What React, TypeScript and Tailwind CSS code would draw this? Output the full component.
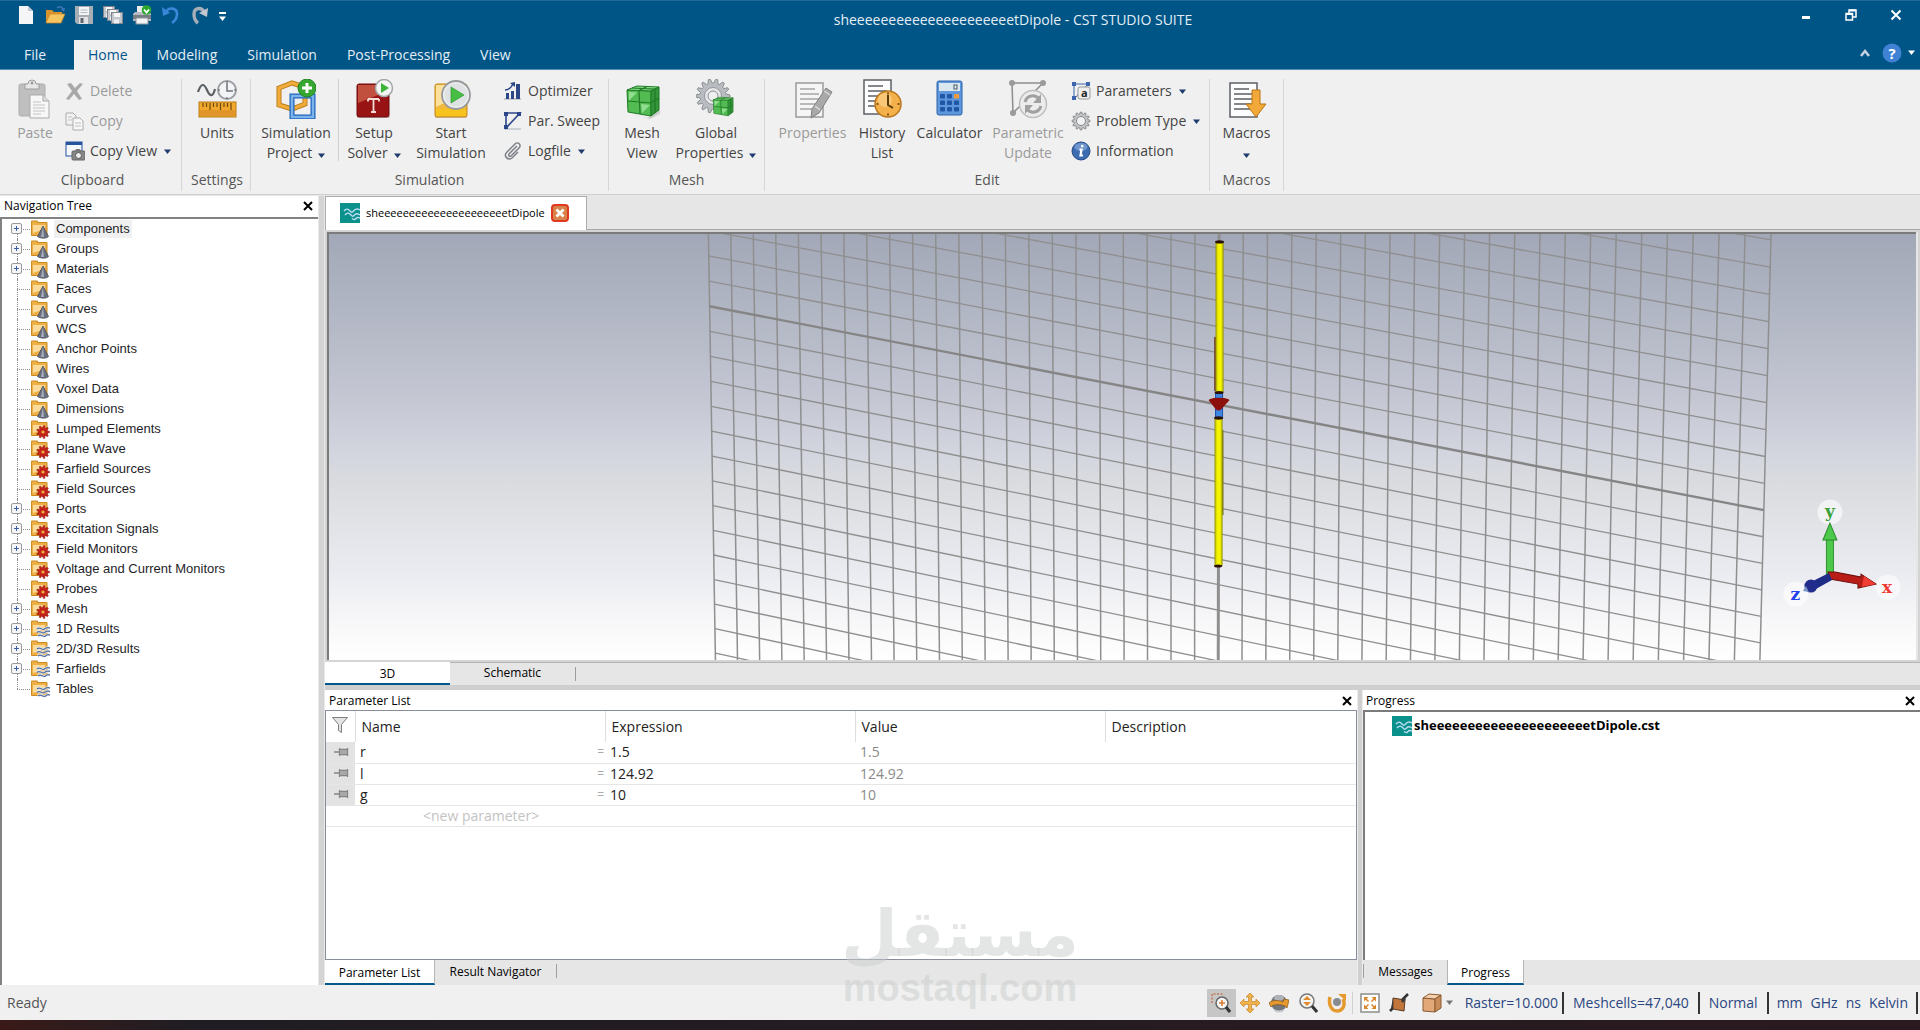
import type { ReactNode } from "react";
import clsx from "clsx";

const PROJECT = "sheeeeeeeeeeeeeeeeeeeeetDipole";

/* ---------- shared bits ---------- */

function Svg({ size = 20, box, className, children }: { size?: number; box?: number; className?: string; children: ReactNode }) {
  const b = box ?? size;
  return (
    <svg width={size} height={size} viewBox={`0 0 ${b} ${b}`} className={clsx("shrink-0", className)} fill="none" aria-hidden="true">
      {children}
    </svg>
  );
}

function Caret({ className }: { className?: string }) {
  return (
    <svg width="7" height="5" viewBox="0 0 7 5" className={clsx("shrink-0", className)} aria-hidden="true">
      <path d="M0 0.5h7L3.5 5z" fill="currentColor" />
    </svg>
  );
}

function CloseX({ label }: { label: string }) {
  return (
    <button aria-label={label} className="flex h-5 w-5 items-center justify-center text-black">
      <Svg size={10}>
        <path d="M1 1l8 8M9 1L1 9" stroke="currentColor" strokeWidth="2" />
      </Svg>
    </button>
  );
}

function WaveLogo({ size = 20 }: { size?: number }) {
  return (
    <Svg size={size} box={20}>
      <rect width="20" height="20" fill="#0b918c" />
      <path d="M4 8c2-2.500 4-2.500 6 0s3 .5 4-.5 3-2.500 6-.5M5 12c2-2.500 4-2.500 6 0s3 .5 4-.5 3-1 5 .5M12 15.500c2 1.500 3 1.500 4 0s3-1 4-.5" stroke="#b9dcf2" strokeWidth="1.400" />
    </Svg>
  );
}

/* ---------- quick access icons ---------- */

const NewIcon = () => (
  <Svg>
    <path d="M3 1h9l5 5v13H3z" fill="#f4f5f7" />
    <path d="M12 1v5h5z" fill="#c3c8d0" />
  </Svg>
);

const OpenIcon = () => (
  <Svg>
    <path d="M1 18V5h6l2 2h8v4" fill="#d9922e" />
    <path d="M1 18l4-9h15l-4 9z" fill="#f7c462" stroke="#c98722" strokeWidth=".7" />
    <path d="M12 3c2-2 5-2 6 2" stroke="#3f78b5" strokeWidth="1.500" />
    <path d="M16 4l3 3 1-4z" fill="#3f78b5" />
  </Svg>
);

const SaveIcon = () => (
  <Svg>
    <path d="M1 1h18v18H3l-2-2z" fill="#a7adb5" />
    <rect x="5" y="2" width="10" height="8" fill="#f2f3f5" />
    <path d="M6.500 5h7M6.500 7.500h7" stroke="#b8bdc4" />
    <rect x="5" y="12" width="9" height="7" fill="#e0e2e5" />
    <rect x="6.500" y="13" width="3" height="5" fill="#5e6670" />
  </Svg>
);

const SaveAllIcon = () => (
  <Svg>
    {[[0, 1], [4, 4], [8, 7]].map(([x, y]) => (
      <g key={x} transform={`translate(${x} ${y})`}>
        <rect x=".5" y=".5" width="11" height="11" fill="#c4c8ce" stroke="#7e858e" />
        <rect x="3" y="1" width="6" height="4" fill="#f6f6f7" />
        <rect x="3" y="7.500" width="5" height="4" fill="#eceef0" />
      </g>
    ))}
  </Svg>
);

const PrintIcon = () => (
  <Svg>
    <rect x="5" y="1" width="9" height="8" fill="#e9ebee" />
    <path d="M1 9l2-2h14l2 2v7H1z" fill="#b7bbc1" />
    <rect x="1" y="10" width="18" height="4" fill="#777d85" />
    <rect x="4" y="13" width="12" height="6" fill="#f3f3f4" stroke="#8c929a" />
    <circle cx="14.500" cy="5" r="4.800" fill="#2ea82f" />
    <path d="M12 4.500L14.500 7.500l2.500-3" stroke="#fff" strokeWidth="1.800" />
  </Svg>
);

const UndoIcon = () => (
  <Svg>
    <path d="M4 8c4-7 12-5 12 1 0 4-2 7-5 9" stroke="#3a86d8" strokeWidth="2.600" />
    <path d="M1 2l1 9 7-3z" fill="#3a86d8" />
  </Svg>
);

const RedoIcon = () => (
  <Svg>
    <path d="M15 8C11 1 4 3 4 9c0 4 1 7 4 9" stroke="#a6afb8" strokeWidth="3.400" />
    <path d="M18 3l-1 9-8-4z" fill="#c2c8ce" />
  </Svg>
);

/* ---------- big ribbon icons, 40 x 40 ---------- */

const PasteIcon = () => (
  <Svg size={40}>
    <rect x="4" y="5" width="26" height="32" rx="2" fill="#bfbfbf" />
    <rect x="4" y="5" width="26" height="32" rx="2" stroke="#adadad" />
    <path d="M10 5h3a4 4 0 0 1 8 0h3v5H10z" fill="#e8e8e8" stroke="#9d9d9d" />
    <circle cx="17" cy="4" r="1.500" fill="#9d9d9d" />
    <path d="M15 16h13l6 6v17H15z" fill="#f7f7f7" stroke="#a9a9a9" />
    <path d="M28 16v6h6" fill="#ddd" stroke="#a9a9a9" />
    <path d="M18 23h8M18 26h12M18 29h12M18 32h12M18 35h8" stroke="#c4c4c4" />
  </Svg>
);

const UnitsIcon = () => (
  <Svg size={40}>
    <path d="M1 13c3-9 6-9 9-2s6 7 8-1" stroke="#5c6166" strokeWidth="2.200" />
    <circle cx="30" cy="11" r="9" fill="#f3f4f5" stroke="#9b9ea3" strokeWidth="2" />
    <path d="M30 4v8h6" stroke="#6b7076" strokeWidth="1.500" />
    <path d="M30 2v2M30 18v2M21 11h2M37 11h2" stroke="#55595f" />
    <rect x="2" y="23" width="37" height="15" fill="#f0a92c" stroke="#b97b14" />
    <path d="M3 37h35v-6H3z" fill="#e0942a" />
    <path d="M6 24v4M9.500 24v4M13 24v7M16.500 24v4M20 24v4M23.500 24v7M27 24v4M30.500 24v4M34 24v7" stroke="#6e4a10" strokeWidth="1.200" />
  </Svg>
);

const SimProjectIcon = () => (
  <Svg size={40}>
    <path d="M3 9l13-5 13 4v17l-13 5L3 26z" fill="none" stroke="#b87b17" strokeWidth="5" />
    <path d="M3 9l13-5 13 4v17l-13 5L3 26z" fill="none" stroke="#f1ab3a" strokeWidth="3.200" />
    <rect x="16" y="17" width="21" height="21" stroke="#1b63bd" strokeWidth="5" />
    <rect x="16" y="17" width="21" height="21" stroke="#7db2ea" strokeWidth="2.600" />
    <circle cx="31" cy="9" r="9" fill="#36a832" stroke="#23811f" />
    <path d="M31 4v10M26 9h10" stroke="#fff" strokeWidth="3" />
  </Svg>
);

const SetupSolverIcon = () => (
  <Svg size={40}>
    <rect x="3" y="37" width="33" height="2" fill="#cfcfcf" />
    <rect x="3" y="5" width="32" height="33" rx="2" fill="#981414" stroke="#6f0c0c" />
    <path d="M4 6h30v6L4 24z" fill="#c2503f" />
    <path d="M14 20h11M19.500 20v13M17 33h5M14 20v2.500M25 20v2.500" stroke="#f6dcd6" strokeWidth="1.800" />
    <circle cx="30" cy="9" r="8.500" fill="#f4f5f5" stroke="#a3a6a9" strokeWidth="1.500" />
    <path d="M27 4l8 5-8 5z" fill="#3cb43a" />
  </Svg>
);

const StartIcon = () => (
  <Svg size={40}>
    <rect x="4" y="37" width="32" height="2" fill="#cfcfcf" />
    <rect x="4" y="5" width="32" height="33" rx="2" fill="#f3b93c" stroke="#c08517" />
    <path d="M5 6h15v15L5 28z" fill="#fbe19b" />
    <path d="M5 30h30v7H5z" fill="#f7c41f" />
    <circle cx="25" cy="16" r="14" fill="#eceeef" stroke="#97999c" strokeWidth="1.800" />
    <circle cx="25" cy="16" r="11.500" fill="#dfe2e3" />
    <path d="M20 8l13 8-13 8z" fill="#46bd43" stroke="#2f9a2d" strokeWidth=".7" />
  </Svg>
);

function GreenCube({ x = 0, y = 0, s = 1 }: { x?: number; y?: number; s?: number }) {
  return (
    <g transform={`translate(${x} ${y}) scale(${s})`}>
      <path d="M2 6l24 1v25L3 28z" fill="#52bb52" stroke="#1f7a24" />
      <path d="M2 6l10-4 22 1-8 4z" fill="#8ade89" stroke="#1f7a24" />
      <path d="M26 7l8-4v23l-8 6z" fill="#33963a" stroke="#1f7a24" />
      <path d="M14 6.500l1 23.500M2.500 17L26 19l8-5M30 5v24M7 4l23 1.200M14 6.500l8-4" stroke="#1f7a24" strokeWidth="1.200" />
      <path d="M4 8l8 .5-8 8zM16 20l9 1-8 8z" fill="#a8e9a6" opacity=".75" />
    </g>
  );
}

const MeshIcon = () => (
  <Svg size={40}>
    <path d="M3 34l22 5 13-8v4l-10 5z" fill="#cdd0cd" />
    <GreenCube x={3} y={5} />
  </Svg>
);

const gearPath = (cx: number, cy: number, r: number, teeth: number, depth: number) => {
  const pts: string[] = [];
  for (let i = 0; i < teeth * 4; i++) {
    const rad = i % 4 < 2 ? r : r - depth;
    const a = ((i - 0.5) / (teeth * 4)) * Math.PI * 2;
    pts.push(`${(cx + rad * Math.cos(a)).toFixed(1)} ${(cy + rad * Math.sin(a)).toFixed(1)}`);
  }
  return `M${pts.join("L")}Z`;
};

const GlobalIcon = () => (
  <Svg size={40}>
    <path d={gearPath(17, 17, 17, 14, 4)} fill="#b9bcc0" stroke="#8a8e93" />
    <circle cx="17" cy="17" r="8.500" fill="#e6e7e9" stroke="#95989c" />
    <circle cx="17" cy="17" r="5" fill="#f0f0f0" stroke="#8a8e93" />
    <GreenCube x={16} y={17} s={0.62} />
  </Svg>
);

function Page({ x = 0, y = 0, gray }: { x?: number; y?: number; gray?: boolean }) {
  return (
    <g transform={`translate(${x} ${y})`}>
      <rect x="1" y="1" width="27" height="34" fill={gray ? "#f5f5f5" : "#fdfdfd"} stroke={gray ? "#9b9b9b" : "#5b5f66"} strokeWidth="1.500" />
      <path d="M5 7h15M5 12h19M5 17h19M5 22h17M5 27h19" stroke={gray ? "#a5a5a5" : "#5b5f66"} strokeWidth="1.600" />
    </g>
  );
}

const PropertiesIcon = () => (
  <Svg size={40}>
    <Page x={2} y={3} gray />
    <path d="M19 30L33 9l6 4-13 21-8 5z" fill="#a9a9a9" stroke="#7f7f7f" />
    <path d="M31 12l6 4M22 27l5 4" stroke="#dcdcdc" strokeWidth="1.500" />
  </Svg>
);

const HistoryIcon = () => (
  <Svg size={40}>
    <Page x={1} />
    <circle cx="26" cy="25" r="13" fill="#f4b04a" stroke="#b9781c" strokeWidth="1.500" />
    <circle cx="23" cy="21" r="7" fill="#fad38b" opacity=".7" />
    <path d="M26 16v10l5 3" stroke="#5d3b09" strokeWidth="2" />
    <path d="M26 13.500v2M26 34.500v2M14.500 25h2M35.500 25h2" stroke="#5d3b09" strokeWidth="1.500" />
  </Svg>
);

const CalculatorIcon = () => (
  <Svg size={40}>
    <rect x="7" y="2" width="25" height="34" rx="2" fill="#5f97dc" stroke="#2c62ab" />
    <rect x="9" y="4" width="21" height="8" fill="#dbe7ef" />
    <rect x="24" y="6" width="3" height="4" stroke="#4c5a66" />
    {[15, 21.5, 28].map((y) =>
      [10, 17, 24].map((x) => (
        <rect key={`${x}-${y}`} x={x} y={y} width="5" height="4.500" rx="1" fill={x === 24 && y === 15 ? "#f29a3c" : "#1f56a6"} />
      ))
    )}
  </Svg>
);

const ParametricIcon = () => (
  <Svg size={40}>
    <path d="M4 4h31L5 34z" stroke="#8d8d8d" strokeWidth="1.500" />
    <circle cx="4" cy="4" r="3" fill="#9a9a9a" />
    <circle cx="35" cy="4" r="3" fill="#9a9a9a" />
    <circle cx="5" cy="34" r="3" fill="#9a9a9a" />
    <circle cx="25" cy="25" r="13.500" fill="#ececec" stroke="#bdbdbd" strokeWidth="1.500" />
    <path d="M17 23c2-7 10-8 14-3M33 27c-2 7-10 8-14 3" stroke="#a0a0a0" strokeWidth="3" />
    <path d="M33 15v9h-8zM17 35v-9h8z" fill="#a0a0a0" />
  </Svg>
);

const MacrosIcon = () => (
  <Svg size={40}>
    <Page x={2} y={3} />
    <path d="M25 11h8v14h6L29 38 19 25h6z" fill="#f3a93a" stroke="#b97413" />
  </Svg>
);

/* ---------- small ribbon icons ---------- */

const DeleteIcon = () => (
  <Svg>
    <path d="M2 3l4-1 4 5 5-5 3 1-6 7 5 8-3 1-5-6-5 6-3-1 6-8z" fill="#a9a9a9" />
  </Svg>
);

const CopyIcon = () => (
  <Svg>
    <path d="M1 2h7l3 3v9H1z" fill="#f2f2f2" stroke="#ababab" />
    <path d="M8 7h7l3 3v9H8z" fill="#f7f7f7" stroke="#ababab" />
    <path d="M3 6h4M3 9h4M10 12h6M10 15h6" stroke="#c0c0c0" />
  </Svg>
);

const CopyViewIcon = () => (
  <Svg>
    <rect x="1" y="1" width="16" height="14" fill="#f4f7fb" stroke="#25539d" />
    <path d="M1 1h16v3H1z" fill="#25539d" />
    <rect x="7" y="10" width="13" height="9" rx="1" fill="#888" stroke="#666" />
    <path d="M10 10l1-2h4l1 2" fill="#777" />
    <circle cx="13.500" cy="14.500" r="3" fill="#eee" stroke="#555" />
  </Svg>
);

const OptimizerIcon = () => (
  <Svg>
    <path d="M1 18h17" stroke="#9aa0a8" />
    <path d="M3 12h3v6H3zM8 10h3v8H8zM13 3h4v15h-4z" fill="#2c4788" />
    <path d="M2 9c3 0 6-2 8-6" stroke="#2c4788" strokeWidth="1.500" />
    <path d="M7 2l5-1v5z" fill="#2c4788" />
  </Svg>
);

const SweepIcon = () => (
  <Svg>
    <path d="M3 2h14L3 17zM3 2v15" stroke="#2c4788" strokeWidth="1.600" />
    <path d="M2 18h16" stroke="#aab0b8" />
    <path d="M1 1h4v4H1zM14 1h4v4h-4zM1 14h4v4H1z" fill="#2c4788" />
  </Svg>
);

const ClipIcon = () => (
  <Svg>
    <path d="M14 5L6 13c-1 2 1 3 2 2l8-8c3-3-1-7-4-4L4 11c-4 4 1 9 5 6l6-6" stroke="#7c8085" strokeWidth="1.500" />
  </Svg>
);

const ParametersIcon = () => (
  <Svg>
    <path d="M3 3h14L3 18z" stroke="#3d64ad" />
    <path d="M1 1h4v4H1zM15 1h4v4h-4zM1 15h4v4H1z" fill="#3d64ad" />
    <rect x="7" y="6" width="12" height="12" rx="2" fill="#eee" stroke="#999" />
    <text x="10" y="16" fontSize="11" fontWeight="700" fontFamily="Open Sans, sans-serif" fill="#222">a</text>
  </Svg>
);

const ProblemIcon = () => (
  <Svg>
    <path d={gearPath(10, 10, 9, 12, 2)} fill="#c3c5c8" stroke="#85888c" />
    <circle cx="10" cy="10" r="4.500" fill="#f2f2f2" stroke="#85888c" />
  </Svg>
);

const InfoIcon = () => (
  <Svg>
    <circle cx="10" cy="10" r="9" fill="#3d6cb0" stroke="#254b86" />
    <ellipse cx="10" cy="6" rx="6.500" ry="4" fill="#8fb3e0" opacity=".6" />
    <path d="M11.500 4l-.5 2.300M8.500 8.500h2l-1 6h2.500" stroke="#fff" strokeWidth="2.200" />
  </Svg>
);

/* ---------- ribbon ---------- */

interface BigProps {
  icon: ReactNode;
  lines: [string, string?];
  caret?: boolean;
  disabled?: boolean;
  width: string;
}

function BigButton({ icon, lines, caret, disabled, width }: BigProps) {
  return (
    <button
      disabled={disabled}
      className={clsx("flex flex-col items-center whitespace-nowrap leading-5", width, disabled ? "text-[#9a9a9a]" : "text-[#444]")}
    >
      {icon}
      <span className="mt-1">{lines[0]}</span>
      <span className="flex h-5 items-center gap-[6px]">
        {lines[1]}
        {caret && <Caret className="mt-1 text-[#1f3a6e]" />}
      </span>
    </button>
  );
}

function SmallButton({ icon, label, caret, disabled }: { icon: ReactNode; label: string; caret?: boolean; disabled?: boolean }) {
  return (
    <button disabled={disabled} className={clsx("flex h-[30px] items-center gap-[5px] whitespace-nowrap", disabled ? "text-[#9a9a9a]" : "text-[#444]")}>
      {icon}
      {label}
      {caret && <Caret className="ml-[2px] text-[#1f3a6e]" />}
    </button>
  );
}

function Group({ title, width, children }: { title: string; width: string; children: ReactNode }) {
  return (
    <section aria-label={title} className={clsx("flex shrink-0 flex-col border-r border-[#d6d6d6]", width)}>
      <div className="flex h-[91px]">{children}</div>
      <div className="text-center leading-5 text-[#555]">{title}</div>
    </section>
  );
}

const SmallColumn = ({ className, children }: { className?: string; children: ReactNode }) => (
  <div className={clsx("-mt-[3px] flex flex-col items-start", className)}>{children}</div>
);

function Ribbon() {
  return (
    <div className="flex h-[125px] border-b border-[#cfcfcf] bg-[#f0f0f0] pt-[9px] pb-[3px] text-sm">
      <Group title="Clipboard" width="w-[182px] pl-1">
        <BigButton icon={<PasteIcon />} lines={["Paste"]} width="w-[62px]" disabled />
        <SmallColumn className="-ml-[1px]">
          <SmallButton icon={<DeleteIcon />} label="Delete" disabled />
          <SmallButton icon={<CopyIcon />} label="Copy" disabled />
          <SmallButton icon={<CopyViewIcon />} label="Copy View" caret />
        </SmallColumn>
      </Group>
      <Group title="Settings" width="w-[69px] pl-[2px]">
        <BigButton icon={<UnitsIcon />} lines={["Units"]} width="w-full" />
      </Group>
      <Group title="Simulation" width="w-[358px]">
        <BigButton icon={<SimProjectIcon />} lines={["Simulation", "Project"]} width="w-[87px] pl-[3px]" caret />
        <div className="h-[82px] w-px bg-[#d0d0d0]" />
        <BigButton icon={<SetupSolverIcon />} lines={["Setup", "Solver"]} width="w-[70px]" caret />
        <BigButton icon={<StartIcon />} lines={["Start", "Simulation"]} width="w-[84px]" />
        <SmallColumn className="ml-[10px]">
          <SmallButton icon={<OptimizerIcon />} label="Optimizer" />
          <SmallButton icon={<SweepIcon />} label="Par. Sweep" />
          <SmallButton icon={<ClipIcon />} label="Logfile" caret />
        </SmallColumn>
      </Group>
      <Group title="Mesh" width="w-[156px]">
        <BigButton icon={<MeshIcon />} lines={["Mesh", "View"]} width="w-[66px]" />
        <BigButton icon={<GlobalIcon />} lines={["Global", "Properties"]} width="w-[82px]" caret />
      </Group>
      <Group title="Edit" width="w-[445px]">
        <BigButton icon={<PropertiesIcon />} lines={["Properties"]} width="w-[95px]" disabled />
        <BigButton icon={<HistoryIcon />} lines={["History", "List"]} width="w-[44px]" />
        <BigButton icon={<CalculatorIcon />} lines={["Calculator"]} width="w-[91px]" />
        <BigButton icon={<ParametricIcon />} lines={["Parametric", "Update"]} width="w-[66px]" disabled />
        <SmallColumn className="ml-[10px]">
          <SmallButton icon={<ParametersIcon />} label="Parameters" caret />
          <SmallButton icon={<ProblemIcon />} label="Problem Type" caret />
          <SmallButton icon={<InfoIcon />} label="Information" />
        </SmallColumn>
      </Group>
      <Group title="Macros" width="w-[74px]">
        <BigButton icon={<MacrosIcon />} lines={["Macros"]} width="w-full" caret />
      </Group>
    </div>
  );
}

/* ---------- title bar ---------- */

const QUICK = [
  { label: "New", Icon: NewIcon },
  { label: "Open", Icon: OpenIcon },
  { label: "Save", Icon: SaveIcon },
  { label: "Save all", Icon: SaveAllIcon },
  { label: "Print", Icon: PrintIcon },
  { label: "Undo", Icon: UndoIcon },
  { label: "Redo", Icon: RedoIcon },
];

function TitleBar() {
  return (
    <header className="bg-[#005587] text-sm text-white">
      <div className="flex h-10 border-t border-[#1f6a97]">
        <div className="flex w-[230px] items-center gap-[9px] pb-3 pl-4">
          {QUICK.map(({ label, Icon }) => (
            <button key={label} aria-label={label} className="shrink-0">
              <Icon />
            </button>
          ))}
          <button aria-label="Customize quick access" className="flex flex-col items-center gap-[2px] pt-1">
            <span className="h-[2px] w-[7px] bg-white" />
            <Caret />
          </button>
        </div>
        <h1 className="grow text-center leading-[38px] text-[#e4eef5]">{PROJECT} - CST STUDIO SUITE</h1>
        <div className="flex items-center justify-end gap-[25px] pr-[14px] pb-3">
          <button aria-label="Minimize" className="flex h-5 w-5 items-center justify-center pt-[6px]">
            <span className="h-[3px] w-[8px] bg-white" />
          </button>
          <button aria-label="Restore" className="flex h-5 w-5 items-center justify-center">
            <Svg size={12}>
              <path d="M4 4V1h7v7H8" stroke="#fff" strokeWidth="1.500" />
              <rect x="1" y="4.500" width="6.500" height="6.500" stroke="#fff" strokeWidth="1.500" />
              <path d="M4 1.500h7M1 5h7" stroke="#fff" strokeWidth="2" />
            </Svg>
          </button>
          <button aria-label="Close" className="flex h-5 w-5 items-center justify-center">
            <Svg size={12}>
              <path d="M1.500 1.500l9 9M10.500 1.500l-9 9" stroke="#fff" strokeWidth="2" />
            </Svg>
          </button>
        </div>
      </div>
      <nav className="flex h-[30px] items-stretch border-b border-[#4f8db3]">
        <button className="w-[74px] pr-1 text-[#e4eef5]">File</button>
        <button className="-mb-px bg-[#f0f0f0] px-[14px] text-[#00558a]">Home</button>
        {["Modeling", "Simulation", "Post-Processing", "View"].map((t) => (
          <button key={t} className="px-[15px] pt-px text-[#e4eef5]">
            {t}
          </button>
        ))}
        <div className="ml-auto flex items-center gap-[6px] pr-[5px] pb-1">
          <button aria-label="Collapse ribbon" className="mr-[6px]">
            <Svg size={10}>
              <path d="M1 8l4-5 4 5" stroke="#c7d3df" strokeWidth="2.500" />
            </Svg>
          </button>
          <button aria-label="Help">
            <Svg>
              <circle cx="10" cy="10" r="9.500" fill="#3f82d4" />
              <text x="10" y="15.500" textAnchor="middle" fontSize="15" fontWeight="700" fontFamily="Open Sans, sans-serif" fill="#fff">?</text>
            </Svg>
          </button>
          <Caret />
        </div>
      </nav>
    </header>
  );
}

/* ---------- navigation tree ---------- */

type Kind = "cone" | "gear" | "wave";

const TREE: { label: string; kind: Kind; open?: boolean }[] = [
  { label: "Components", kind: "cone", open: true },
  { label: "Groups", kind: "cone", open: true },
  { label: "Materials", kind: "cone", open: true },
  { label: "Faces", kind: "cone" },
  { label: "Curves", kind: "cone" },
  { label: "WCS", kind: "cone" },
  { label: "Anchor Points", kind: "cone" },
  { label: "Wires", kind: "cone" },
  { label: "Voxel Data", kind: "cone" },
  { label: "Dimensions", kind: "cone" },
  { label: "Lumped Elements", kind: "gear" },
  { label: "Plane Wave", kind: "gear" },
  { label: "Farfield Sources", kind: "gear" },
  { label: "Field Sources", kind: "gear" },
  { label: "Ports", kind: "gear", open: true },
  { label: "Excitation Signals", kind: "gear", open: true },
  { label: "Field Monitors", kind: "gear", open: true },
  { label: "Voltage and Current Monitors", kind: "gear" },
  { label: "Probes", kind: "gear" },
  { label: "Mesh", kind: "gear", open: true },
  { label: "1D Results", kind: "wave", open: true },
  { label: "2D/3D Results", kind: "wave", open: true },
  { label: "Farfields", kind: "wave", open: true },
  { label: "Tables", kind: "wave" },
];

function FolderIcon({ kind }: { kind: Kind }) {
  return (
    <Svg>
      <path d="M1.500 3.500v-1.500h6v1.500h9.500v13h-15.500z" fill="#eeb045" stroke="#c98a22" />
      <path d="M3 6h12v4L3 14z" fill="#fadb9c" />
      {kind === "cone" && (
        <>
          <path d="M13 7l5.500 10.500c-2 2.200-8 2.200-11 0z" fill="#6a7080" stroke="#474c5a" strokeWidth=".8" />
          <path d="M13 8l1 10h-3z" fill="#a7adba" />
        </>
      )}
      {kind === "gear" && (
        <>
          <path d={gearPath(13, 13, 6.5, 9, 2)} fill="#c3221b" stroke="#931510" strokeWidth=".6" />
          <circle cx="13" cy="13" r="1.600" fill="#f0b040" />
        </>
      )}
      {kind === "wave" && (
        <>
          <path d="M7 10c3-3 5 2 7.500 0S18 8.500 20 9M7 13.500c3-3 5 2 7.500 0S18 12 20 12.500M8 17c3-3 5 2 7.500 0S18 15.500 20 16" stroke="#e9edf4" strokeWidth="2.600" />
          <path d="M7 10c3-3 5 2 7.500 0S18 8.500 20 9M7 13.500c3-3 5 2 7.500 0S18 12 20 12.500M8 17c3-3 5 2 7.500 0S18 15.500 20 16" stroke="#5470a0" strokeWidth="1.300" />
        </>
      )}
    </Svg>
  );
}

function NavigationTree() {
  return (
    <aside className="flex w-[318px] shrink-0 flex-col bg-white">
      <div className="flex h-[21px] items-center justify-between pl-1 text-xs text-black">
        <h2>Navigation Tree</h2>
        <CloseX label="Close navigation tree" />
      </div>
      <ul className="grow border-t-2 border-l-2 border-[#828282] font-['Liberation_Sans',sans-serif] text-[13px] text-[#1e1e28]">
        {TREE.map((n, i) => (
          <li key={n.label} className="flex h-5 items-center pl-[9px]">
            <span className="relative flex h-5 w-[19px] items-center">
              <span
                className={clsx(
                  "absolute left-[6px] border-l border-dotted border-[#8a8a8a]",
                  i === 0 ? "top-[10px] h-[10px]" : i === TREE.length - 1 ? "top-0 h-[10px]" : "top-0 h-5"
                )}
              />
              <span className="absolute top-[10px] right-0 left-[6px] border-t border-dotted border-[#8a8a8a]" />
              {n.open && (
                <button aria-label={`Expand ${n.label}`} className="relative h-[11px] w-[11px] rounded-[2px] border border-[#9a9a9a] bg-[#f6f6f6]">
                  <span className="absolute top-[4px] left-[2px] h-px w-[5px] bg-[#3f5fa8]" />
                  <span className="absolute top-[2px] left-[4px] h-[5px] w-px bg-[#3f5fa8]" />
                </button>
              )}
            </span>
            <FolderIcon kind={n.kind} />
            <span className={clsx("ml-1 px-[2px] leading-[18px]", i === 0 && "bg-[#f0f0f0]")}>{n.label}</span>
          </li>
        ))}
      </ul>
    </aside>
  );
}

/* ---------- 3D viewport ---------- */

// perspective spacing of the vertical grid lines around the y axis
const persp = (center: number, a: number, b: number, n: number) => center + (a * n) / (1 - b * n);

// the plane's outer edges lean inwards towards the bottom
const leftEdge = (y: number) => 709 + (7.3 * (y - 234)) / 426;
const rightEdge = (y: number) => 1771.3 - (11.3 * (y - 234)) / 426;

const range = (from: number, to: number) => Array.from({ length: to - from + 1 }, (_, i) => from + i);

function Viewport() {
  return (
    <svg className="block h-full w-full" viewBox="330 234 1586 426" preserveAspectRatio="xMidYMid slice" role="img" aria-label="3D view of the dipole">
      <defs>
        <linearGradient id="sky" x1="0" y1="0" x2="0" y2="1">
          <stop offset="0" stopColor="#a2a8b7" />
          <stop offset=".28" stopColor="#babecb" />
          <stop offset=".4" stopColor="#c6c8d4" />
          <stop offset=".52" stopColor="#d3d6df" />
          <stop offset=".58" stopColor="#dadbdf" />
          <stop offset=".8" stopColor="#ebecf1" />
          <stop offset=".92" stopColor="#f8f8f9" />
          <stop offset="1" stopColor="#ffffff" />
        </linearGradient>
        <linearGradient id="rod" x1="0" y1="0" x2="1" y2="0">
          <stop offset="0" stopColor="#8f8f00" />
          <stop offset=".3" stopColor="#f2f200" />
          <stop offset=".7" stopColor="#f6f600" />
          <stop offset="1" stopColor="#8f8f00" />
        </linearGradient>
      </defs>
      <rect x="330" y="234" width="1586" height="426" fill="url(#sky)" />
      <g stroke="#8f8f8f">
        {range(-22, 22).map((n) => (
          <line
            key={n}
            x1={persp(1219.5, 24.1, 0.00177, n)}
            y1="234"
            x2={persp(1218.7, 23.69, 0.00169, n)}
            y2="660"
            strokeWidth={n === 0 ? 3 : 1.5}
          />
        ))}
        {range(-19, 15).map((k) => {
          const y1 = 306.3 + 25.1 * k - 0.024 * k * k;
          const y2 = 510 + 26.7 * k - 0.03 * k * k;
          return (
            <line
              key={k}
              x1={leftEdge(y1)}
              y1={y1}
              x2={rightEdge(y2)}
              y2={y2}
              stroke={k === 0 ? "#858585" : undefined}
              strokeWidth={k === 0 ? 2.4 : 1.3}
            />
          );
        })}
      </g>

      {/* dipole arms, gap and port */}
      <rect x="1214.500" y="337" width="2" height="54" fill="#7a4a3a" />
      <rect x="1222" y="430" width="2" height="85" fill="#7d7a30" />
      <rect x="1216" y="243" width="8" height="149" fill="url(#rod)" />
      <rect x="1215" y="419" width="8" height="147" fill="url(#rod)" />
      <rect x="1216" y="392" width="7" height="27" fill="#3f86e0" />
      <path d="M1216 392v27M1223 392v27" stroke="#1c4ea8" />
      <ellipse cx="1220" cy="242" rx="4.500" ry="1.700" fill="#2a0f0a" />
      <ellipse cx="1219.500" cy="392.500" rx="4.500" ry="1.500" fill="#2a0f0a" />
      <ellipse cx="1219" cy="418" rx="4.500" ry="1.700" fill="#2a0f0a" />
      <ellipse cx="1218.500" cy="566" rx="4" ry="1.500" fill="#2a0f0a" />
      <path d="M1209 400c3-3 18-3 21 0l-8 9c-2 2-4 2-6 0z" fill="#8c100b" />

      {/* orientation triad */}
      <g fill="#fff" opacity=".6">
        <circle cx="1830" cy="512" r="12.500" />
        <circle cx="1888" cy="587" r="12.500" />
        <circle cx="1796" cy="594" r="12.500" />
      </g>
      <rect x="1826.500" y="539" width="7" height="35" fill="#4cc84a" stroke="#2f9430" />
      <path d="M1830 523l7 17h-14z" fill="#4cc84a" stroke="#2a8a2a" />
      <path d="M1828 572h7l26 5v-3l15 10-18 4v-4l-28-5z" fill="#b81d17" stroke="#6c0d0a" />
      <path d="M1864 576l12 8-14 3z" fill="#f03d33" />
      <path d="M1829 573l-16 8 3 8 16-9z" fill="#1f2c86" />
      <circle cx="1811" cy="586" r="6.500" fill="#222c8c" />
      <path d="M1806 586l-3 5 6 1z" fill="#7a96c8" />
      <g fontFamily="DejaVu Serif, serif" fontWeight="700" fontSize="17" textAnchor="middle">
        <text x="1830" y="517" fill="#3aa037">y</text>
        <text x="1887" y="593" fill="#ef3b33">x</text>
        <text x="1795.500" y="600" fill="#2440ee">z</text>
      </g>
    </svg>
  );
}

/* ---------- bottom panels ---------- */

const PARAMS = [
  { name: "r", value: "1.5" },
  { name: "l", value: "124.92" },
  { name: "g", value: "10" },
];

function Tab({ label, active, className }: { label: string; active?: boolean; className?: string }) {
  return (
    <button
      role="tab"
      aria-selected={!!active}
      className={clsx("h-full text-xs text-black", active ? "border-b-2 border-[#00588c] bg-white pt-[2px]" : "border-b-2 border-transparent", className)}
    >
      {label}
    </button>
  );
}

const TabDivider = () => <span className="mt-1 h-[14px] w-px bg-[#9e9e9e]" />;

function ParameterList() {
  return (
    <section className="flex min-w-0 grow flex-col">
      <div className="flex h-5 items-center justify-between bg-white pt-px pl-1 text-xs text-black">
        <h2>Parameter List</h2>
        <CloseX label="Close parameter list" />
      </div>
      <div className="grow border border-[#878d9a] bg-white">
        <table className="w-full table-fixed border-collapse text-left text-sm text-[#222]">
          <colgroup>
            <col className="w-[29px]" />
            <col className="w-[250px]" />
            <col className="w-[250px]" />
            <col className="w-[250px]" />
            <col />
          </colgroup>
          <thead>
            <tr className="h-[31px]">
              <th className="pb-1 pl-[5px]">
                <Svg size={18} box={18}>
                  <path d="M1.500 1.500h15l-6 7v8l-3-2v-6z" fill="#e4e4e4" stroke="#7d7d7d" />
                </Svg>
              </th>
              {["Name", "Expression", "Value", "Description"].map((h) => (
                <th key={h} className="border-l border-[#dedede] pt-px pl-[6px] font-normal">
                  {h}
                </th>
              ))}
            </tr>
          </thead>
          <tbody>
            {PARAMS.map((p) => (
              <tr key={p.name} className="h-[21px] border-b border-[#e6e6e6] leading-5">
                <td className="bg-[#e3e3e3] pl-2">
                  <Svg size={15} box={15}>
                    <path d="M0 7h5M5.500 3v8M13.500 3v8M6 4.500h7M6 9.500h7" stroke="#858585" strokeWidth="1.300" />
                    <rect x="6" y="5" width="7" height="4" fill="#a8a8a8" />
                  </Svg>
                </td>
                <td className="pl-[5px]">
                  <span className="flex justify-between">
                    {p.name}
                    <span className="pr-[1px] text-xs leading-5 text-[#aaa]">=</span>
                  </span>
                </td>
                <td className="pl-[5px]">{p.value}</td>
                <td className="pl-[5px] text-[#8a8a8a]">{p.value}</td>
                <td />
              </tr>
            ))}
            <tr className="h-[21px] border-b border-[#e6e6e6]">
              <td />
              <td colSpan={4} className="pl-[68px]">
                <input aria-label="New parameter" placeholder="<new parameter>" className="block h-5 w-40 outline-none placeholder:text-[#c3c3c3]" />
              </td>
            </tr>
          </tbody>
        </table>
      </div>
      <div role="tablist" className="flex h-[25px]">
        <Tab label="Parameter List" active className="w-[110px] border-r border-r-[#b5b5b5]" />
        <Tab label="Result Navigator" className="w-[121px]" />
        <TabDivider />
      </div>
    </section>
  );
}

function ProgressPanel() {
  return (
    <section className="flex w-[557px] shrink-0 flex-col">
      <div className="flex h-5 items-center justify-between bg-white pt-px pl-[3px] text-xs text-black">
        <h2>Progress</h2>
        <CloseX label="Close progress" />
      </div>
      <div className="grow border-t-2 border-l-2 border-[#7b7b7b] bg-white pt-1 pl-[27px]">
        <div className="flex items-center gap-[2px] text-[13px] font-bold text-black">
          <WaveLogo />
          {PROJECT}.cst
        </div>
      </div>
      <div role="tablist" className="flex h-[25px]">
        <TabDivider />
        <Tab label="Messages" className="w-[83px]" />
        <Tab label="Progress" active className="w-[77px] border-x border-x-[#b5b5b5]" />
      </div>
    </section>
  );
}

/* ---------- status bar ---------- */

const VIEW_TOOLS: { label: string; active?: boolean; art: ReactNode }[] = [
  {
    label: "Zoom window",
    active: true,
    art: (
      <>
        <path d="M1 10V1h11" stroke="#c8551c" strokeDasharray="2 1.500" />
        <circle cx="11" cy="10" r="6" fill="#f5f5f5" stroke="#666" strokeWidth="1.500" />
        <path d="M8 10h6M11 7v6" stroke="#d9792a" strokeWidth="1.500" />
        <path d="M15 14l4 5" stroke="#333" strokeWidth="3" />
      </>
    ),
  },
  {
    label: "Pan",
    art: <path d="M10 0l4 4h-2.500v4.500H16V6l4 4-4 4v-2.500h-4.500V16H14l-4 4-4-4h2.500v-4.500H4V14l-4-4 4-4v2.500h4.500V4H6z" fill="#efb24c" stroke="#c58423" strokeWidth=".7" />,
  },
  {
    label: "Rotate",
    art: (
      <>
        <circle cx="10" cy="10" r="8" fill="#73777c" />
        <ellipse cx="10" cy="5" rx="5" ry="3" fill="#aeb2b6" />
        <path d="M0 10c2-3 11-3 14-1l1-3 5 1-2 8-2-2c-5-2-12-2-14 1z" fill="#e59a30" stroke="#8a5510" strokeWidth=".7" />
        <path d="M5 16c3 2 7 2 10 0v2c-3 2-7 2-10 0z" fill="#c9ccd0" />
      </>
    ),
  },
  {
    label: "Dynamic zoom",
    art: (
      <>
        <circle cx="9" cy="8" r="7" fill="#f5f5f5" stroke="#777" strokeWidth="1.500" />
        <path d="M9 3l4 4H5zM9 13l4-4H5z" fill="#df8b2c" />
        <path d="M14 13l5 6" stroke="#333" strokeWidth="3" />
      </>
    ),
  },
  {
    label: "Spin",
    art: (
      <>
        <circle cx="10" cy="9" r="4" fill="#888c92" />
        <path d="M3 4c-2 8 2 14 7 14s9-5 6-12" stroke="#e59a30" strokeWidth="3.500" />
        <path d="M11 1h8v7z" fill="#e59a30" />
      </>
    ),
  },
];

const FIT_TOOLS: { label: string; art: ReactNode }[] = [
  {
    label: "Fit",
    art: (
      <>
        <rect x="1" y="1" width="18" height="18" fill="#fff" stroke="#8c8c8c" strokeWidth="1.500" />
        <path d="M4 4h4.500L4 8.500zM16 4v4.500L11.500 4zM16 16h-4.500l4.500-4.500zM4 16v-4.500L8.500 16z" fill="#d9862c" />
        <path d="M5 5l3.500 3.500M15 5l-3.500 3.500M15 15l-3.500-3.500M5 15l3.500-3.500" stroke="#d9862c" strokeWidth="1.500" />
      </>
    ),
  },
  {
    label: "Cutting plane",
    art: (
      <>
        <path d="M1 18l5-5M12 8l7-7" stroke="#333" strokeWidth="2.500" />
        <path d="M4 5l12 2-1 11-11-2z" fill="#c3763b" stroke="#5b3a22" />
        <path d="M4 5l-2 10 2 1zM12 8l3-4 2 2-3 4z" fill="#3a3a3a" />
      </>
    ),
  },
];

function ToolButton({ label, active, children }: { label: string; active?: boolean; children: ReactNode }) {
  return (
    <button aria-label={label} aria-pressed={!!active} className={clsx("flex h-7 w-[29px] shrink-0 items-center justify-center", active && "bg-[#c6c6c6]")}>
      <Svg>{children}</Svg>
    </button>
  );
}

const Bar = () => <span className="h-[22px] w-[2px] bg-[#333]" />;

function StatusBar() {
  return (
    <footer className="flex h-[35px] items-center bg-[#f0f0f0] pr-[2px] pl-[7px] text-sm text-[#555]">
      <span>Ready</span>
      <div className="ml-auto flex items-center">
        {VIEW_TOOLS.map((t) => (
          <ToolButton key={t.label} label={t.label} active={t.active}>
            {t.art}
          </ToolButton>
        ))}
        <span className="mr-[3px] h-[22px] w-px bg-[#d0d0d0]" />
        {FIT_TOOLS.map((t) => (
          <ToolButton key={t.label} label={t.label}>
            {t.art}
          </ToolButton>
        ))}
        <button aria-label="View options" className="ml-2 flex h-7 items-center gap-1">
          <Svg>
            <path d="M1 5l12 1v13L1 18z" fill="#e2a878" stroke="#8a5a33" />
            <path d="M1 5l6-4 12 1-6 4z" fill="#f3cfae" stroke="#8a5a33" />
            <path d="M13 6l6-4v13l-6 4z" fill="#c98b58" stroke="#8a5a33" />
          </Svg>
          <Caret className="text-[#777]" />
        </button>
      </div>
      <div className="flex items-center text-[#2b4680]">
        <span className="pr-1 pl-3">Raster=10.000</span>
        <Bar />
        <span className="px-[9px]">Meshcells=47,040</span>
        <Bar />
        <span className="px-[9px]">Normal</span>
        <Bar />
        <span className="flex gap-2 px-2">
          <span>mm</span>
          <span>GHz</span>
          <span>ns</span>
          <span>Kelvin</span>
        </span>
        <Bar />
      </div>
    </footer>
  );
}

/* ---------- page ---------- */

export default function App() {
  return (
    <div className="relative flex h-screen min-h-[760px] flex-col overflow-hidden bg-[#e6e6e6] font-['Open_Sans',sans-serif]">
      <TitleBar />
      <Ribbon />
      <main className="flex min-h-0 grow pt-px">
        <NavigationTree />
        <div className="w-[7px] shrink-0 border-x border-[#e8e8e8] bg-[#d4d4d4]" />
        <div className="flex min-w-0 grow flex-col">
          <div className="flex h-[34px] shrink-0 items-stretch border-b border-[#a9a9a9]">
            <div className="-mb-px flex w-[262px] items-center gap-[6px] border border-b-0 border-[#ababab] bg-white pl-[14px] text-[11px] font-medium text-black">
              <WaveLogo />
              <span>{PROJECT}</span>
              <button aria-label="Close project" className="shrink-0">
                <Svg size={18}>
                  <rect x="1" y="1" width="16" height="16" rx="3" fill="#d9834c" stroke="#df3a20" strokeWidth="2" />
                  <path d="M5.500 5.500l7 7M12.500 5.500l-7 7" stroke="#fff" strokeWidth="2.800" />
                </Svg>
              </button>
            </div>
          </div>
          <div className="min-h-0 grow border-2 border-[#d4d4d4] pr-[2px]">
            <div className="h-full border-t-2 border-l-2 border-[#7b7b7b]">
              <Viewport />
            </div>
          </div>
          <div role="tablist" className="flex h-[23px] shrink-0">
            <Tab label="3D" active className="w-[125px]" />
            <div className="flex grow border-t border-[#b5b5b5]">
              <Tab label="Schematic" className="w-[125px]" />
              <TabDivider />
            </div>
          </div>
          <div className="h-[5px] shrink-0 bg-[#cfcfcf]" />
          <div className="flex h-[295px] shrink-0">
            <ParameterList />
            <div className="w-[6px] shrink-0 border-x border-[#ececec] bg-[#d0d0d0]" />
            <ProgressPanel />
          </div>
        </div>
      </main>
      <StatusBar />
      <div className="h-[10px] shrink-0 bg-linear-to-r from-[#3a1a18] via-[#1f1d23] via-10% to-[#2a1a1f]" />

      {/* translucent site mark */}
      <div className="pointer-events-none absolute inset-x-0 bottom-[22px] flex flex-col items-center text-[#c9cccb]/50">
        <span lang="ar" dir="rtl" className="font-['DejaVu_Sans',sans-serif] text-[65px] leading-[68px] font-bold">
          مستقل
        </span>
        <span className="font-['Liberation_Sans',sans-serif] text-[38px] leading-10 font-bold">mostaql.com</span>
      </div>
    </div>
  );
}
